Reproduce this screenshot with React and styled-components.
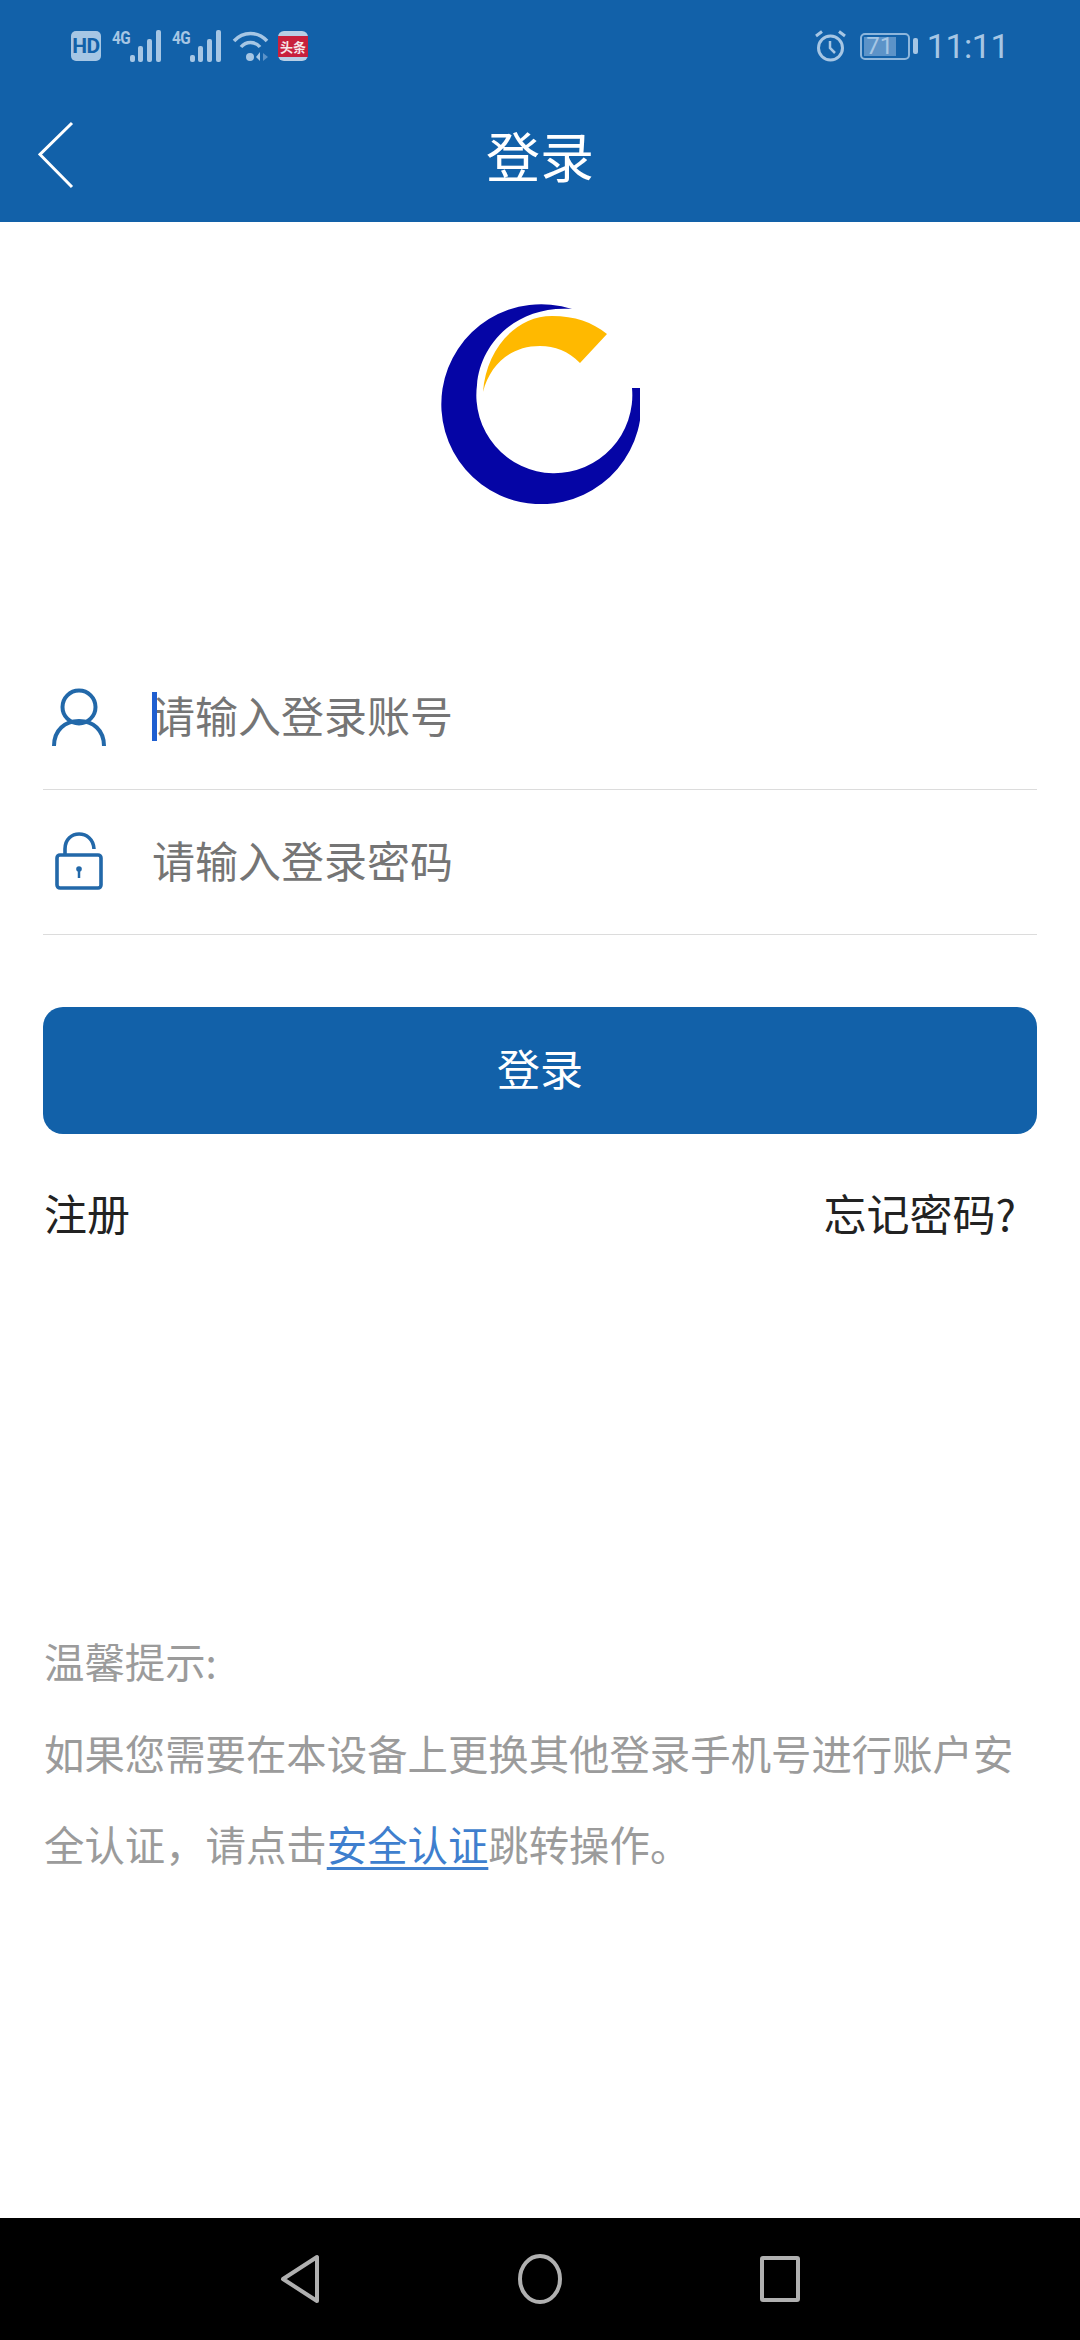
import React from 'react';
import styled, { createGlobalStyle } from 'styled-components';

const GlobalStyle = createGlobalStyle`
  html, body {
    margin: 0;
    padding: 0;
    background: #ffffff;
  }

  * {
    box-sizing: border-box;
  }
`;

const Page = styled.div`
  background: #ffffff;
  color: #222222;
  display: flex;
  flex-direction: column;
  font-family: 'Noto Sans CJK SC', 'Noto Sans', sans-serif;
  height: 2340px;
  overflow: hidden;
  width: 1080px;
`;

const Header = styled.header`
  background: #1261a9;
  display: flex;
  flex-direction: column;
  height: 222px;
`;

const StatusBar = styled.div`
  align-items: center;
  color: #a6c6e4;
  display: flex;
  height: 92px;
  justify-content: space-between;
  padding: 0 71px 0 71px;
`;

const StatusGroup = styled.div`
  align-items: center;
  display: flex;
`;

const HdBadge = styled.span`
  align-items: center;
  background: #a6c6e4;
  border-radius: 5px;
  color: #1261a9;
  display: flex;
  font-family: 'Roboto', sans-serif;
  font-size: 21px;
  font-weight: 700;
  height: 30px;
  justify-content: center;
  letter-spacing: -0.5px;
  margin-right: 11px;
  width: 30px;
`;

const Signal = styled.div`
  display: flex;
  height: 32px;
  margin-right: 9px;
  position: relative;
  width: 51px;
`;

const SignalLabel = styled.span`
  font-family: 'Roboto', sans-serif;
  font-size: 18px;
  font-weight: 700;
  left: 0;
  letter-spacing: -0.5px;
  line-height: 16px;
  position: absolute;
  top: 0;
  transform: scaleX(0.85);
  transform-origin: left;
`;

const SignalBars = styled.svg`
  margin-left: auto;
`;

const WifiIcon = styled.svg`
  margin-right: 9px;
`;

const NewsBadge = styled.div`
  background: #b9cfe5;
  border-radius: 6px;
  display: flex;
  flex-direction: column;
  height: 30px;
  justify-content: center;
  width: 30px;
`;

const NewsBand = styled.span`
  background: #c8203c;
  color: #f6e6e8;
  font-size: 13px;
  font-weight: 700;
  height: 21px;
  line-height: 21px;
  text-align: center;
  white-space: nowrap;
`;

const AlarmIcon = styled.svg`
  margin-right: 14px;
`;

const Battery = styled.div`
  align-items: center;
  border: 2px solid #8db6dc;
  border-radius: 5px;
  display: flex;
  height: 27px;
  position: relative;
  width: 50px;
`;

const BatteryFill = styled.div`
  background: #5c93c8;
  bottom: 2px;
  left: 2px;
  position: absolute;
  top: 2px;
`;

const BatteryLabel = styled.span`
  font-family: 'Roboto', sans-serif;
  font-size: 24px;
  line-height: 23px;
  position: relative;
  text-align: center;
  width: 36px;
`;

const BatteryTip = styled.div`
  background: #a6c6e4;
  border-radius: 2px;
  height: 16px;
  margin-left: 3px;
  width: 5px;
`;

const Clock = styled.span`
  font-family: 'Roboto', sans-serif;
  font-size: 34px;
  font-weight: 400;
  letter-spacing: -0.5px;
  margin-left: 9px;
`;

const TitleBar = styled.div`
  align-items: center;
  display: flex;
  height: 130px;
  justify-content: center;
  padding-bottom: 5px;
  position: relative;
`;

const BackIcon = styled.svg`
  left: 38px;
  position: absolute;
  top: 29px;
`;

const Title = styled.h1`
  color: #ffffff;
  font-size: 54px;
  font-weight: 400;
  line-height: 70px;
  margin: 0;
`;

const LogoWrap = styled.div`
  display: flex;
  justify-content: center;
  padding: 81px 0 141px;
`;

const Form = styled.form`
  display: flex;
  flex-direction: column;
  padding: 0 43px;
`;

const Field = styled.label`
  align-items: center;
  border-bottom: 1px solid #dcdcdc;
  display: flex;
  height: 145px;
  padding-bottom: 4px;
`;

const FieldIcon = styled.div`
  display: flex;
  justify-content: center;
  margin-right: 38px;
  padding-top: ${(props) => props.$offset}px;
  width: 72px;
`;

const Placeholder = styled.span`
  color: #757575;
  font-size: 43px;
  line-height: 60px;
  margin-bottom: 3px;
  margin-left: -1px;
  position: relative;
`;

const Caret = styled.i`
  background: #1f5fd0;
  bottom: 3px;
  left: 0;
  position: absolute;
  top: 8px;
  width: 5px;
`;

const SubmitButton = styled.button`
  background: #1261a9;
  border: 0;
  border-radius: 20px;
  color: #ffffff;
  font-family: inherit;
  font-size: 43px;
  height: 127px;
  line-height: 60px;
  margin-top: 72px;
  padding: 0 0 8px;
`;

const LinkRow = styled.div`
  display: flex;
  font-size: 43px;
  justify-content: space-between;
  line-height: 60px;
  margin-top: 48px;
  padding: 0 21px 0 1px;
`;

const Hint = styled.section`
  color: #9b9b9b;
  font-size: 40.4px;
  line-height: 91.5px;
  margin-top: 373px;
  padding: 0 44px;
`;

const HintLink = styled.a`
  color: #3f7fce;
  text-decoration: underline;
  text-decoration-thickness: 3px;
  text-underline-offset: 6px;
`;

const NavBar = styled.nav`
  align-items: center;
  background: #000000;
  display: flex;
  height: 122px;
  justify-content: center;
  margin-top: auto;
`;

const NavSlot = styled.div`
  display: flex;
  justify-content: center;
  width: 240px;
`;

const BARS = [
  { x: 0, y: 25, h: 7 },
  { x: 8, y: 16, h: 16 },
  { x: 17, y: 9, h: 23 },
  { x: 26, y: 0, h: 32 },
];

const SignalGroup = () => (
  <Signal>
    <SignalLabel>4G</SignalLabel>
    <SignalBars width="33" height="32" viewBox="0 0 33 32" fill="#a6c6e4">
      {BARS.map((bar) => (
        <rect key={bar.x} x={bar.x} y={bar.y} width="5" height={bar.h} rx="2" />
      ))}
    </SignalBars>
  </Signal>
);

const Logo = () => (
  <svg width="200" height="201" viewBox="440 303 200 201">
    <path
      fill="#0505a5"
      d="M572 309 A100 100 0 1 0 640 388 L632 388 A78 78 0 1 1 477 385 C480 345 515 305 572 309 Z"
    />
    <path
      fill="#ffb900"
      d="M483 392 C486 350 515 316 552 316 C575 316 592 322 607 334 L580 363 C568 351 555 346 540 346 C510 346 490 365 483 392 Z"
    />
  </svg>
);

const App = () => (
  <Page>
    <GlobalStyle />
    <Header>
      <StatusBar>
        <StatusGroup>
          <HdBadge>HD</HdBadge>
          <SignalGroup />
          <SignalGroup />
          <WifiIcon width="37" height="32" viewBox="0 0 37 32" fill="none">
            <path d="M2 11 C11 1 26 1 35 11" stroke="#a6c6e4" strokeWidth="3.5" />
            <path d="M9 17 C14 11 23 11 28 17" stroke="#a6c6e4" strokeWidth="3.5" />
            <circle cx="18" cy="27" r="4" fill="#a6c6e4" />
            <path d="M24 27 L28 22 V31 Z" fill="#a6c6e4" />
            <path d="M31 23 L36 27 L31 31 Z" fill="#5c93c8" />
          </WifiIcon>
          <NewsBadge>
            <NewsBand>头条</NewsBand>
          </NewsBadge>
        </StatusGroup>
        <StatusGroup>
          <AlarmIcon width="31" height="32" viewBox="0 0 31 32" fill="none" stroke="#a6c6e4">
            <circle cx="15.5" cy="18" r="12" strokeWidth="3" />
            <path d="M15 11 V18 L20 23" strokeWidth="2.5" />
            <path d="M1 6 L7 1.5 M30 6 L24 1.5" strokeWidth="3" />
          </AlarmIcon>
          <Battery>
            <BatteryFill style={{ width: `${71 * 0.46}px` }} />
            <BatteryLabel>71</BatteryLabel>
          </Battery>
          <BatteryTip />
          <Clock>11:11</Clock>
        </StatusGroup>
      </StatusBar>
      <TitleBar>
        <BackIcon width="36" height="68" viewBox="0 0 36 68" fill="none">
          <path d="M34 2 L2 33.5 L34 66" stroke="#ffffff" strokeWidth="3" />
        </BackIcon>
        <Title>登录</Title>
      </TitleBar>
    </Header>
    <LogoWrap>
      <Logo />
    </LogoWrap>
    <Form>
      <Field>
        <FieldIcon $offset={6}>
          <svg width="54" height="60" viewBox="0 0 54 60" fill="none" stroke="#2268a9" strokeWidth="4">
            <circle cx="27" cy="19" r="16.5" />
            <path d="M2 58 C2 42 13 33 27 33 C41 33 52 42 52 58" />
          </svg>
        </FieldIcon>
        <Placeholder>
          <Caret />
          请输入登录账号
        </Placeholder>
      </Field>
      <Field>
        <FieldIcon $offset={2}>
          <svg width="48" height="58" viewBox="0 0 48 58" fill="none" stroke="#2268a9" strokeWidth="3.6">
            <rect x="2" y="23" width="44" height="33" rx="3" />
            <path d="M10 23 V17 C10 -3 38 -3 39 17" />
            <circle cx="24" cy="37" r="2.8" fill="#2268a9" stroke="none" />
            <path d="M24 38 V46" strokeWidth="2.5" />
          </svg>
        </FieldIcon>
        <Placeholder>请输入登录密码</Placeholder>
      </Field>
      <SubmitButton type="button">登录</SubmitButton>
      <LinkRow>
        <span>注册</span>
        <span>忘记密码?</span>
      </LinkRow>
    </Form>
    <Hint>
      <div>温馨提示:</div>
      <div>
        如果您需要在本设备上更换其他登录手机号进行账户安全认证，请点击
        <HintLink>安全认证</HintLink>
        跳转操作。
      </div>
    </Hint>
    <NavBar>
      <NavSlot>
        <svg width="40" height="50" viewBox="0 0 40 50" fill="none" stroke="#b0b0b0" strokeWidth="4" strokeLinejoin="round">
          <path d="M37 3 V47 L3 25 Z" />
        </svg>
      </NavSlot>
      <NavSlot>
        <svg width="44" height="50" viewBox="0 0 44 50" fill="none" stroke="#b0b0b0" strokeWidth="4">
          <ellipse cx="22" cy="25" rx="20" ry="23" />
        </svg>
      </NavSlot>
      <NavSlot>
        <svg width="40" height="46" viewBox="0 0 40 46" fill="none" stroke="#b0b0b0" strokeWidth="4" strokeLinejoin="round">
          <rect x="2" y="2" width="36" height="42" rx="1" />
        </svg>
      </NavSlot>
    </NavBar>
  </Page>
);

export default App;
